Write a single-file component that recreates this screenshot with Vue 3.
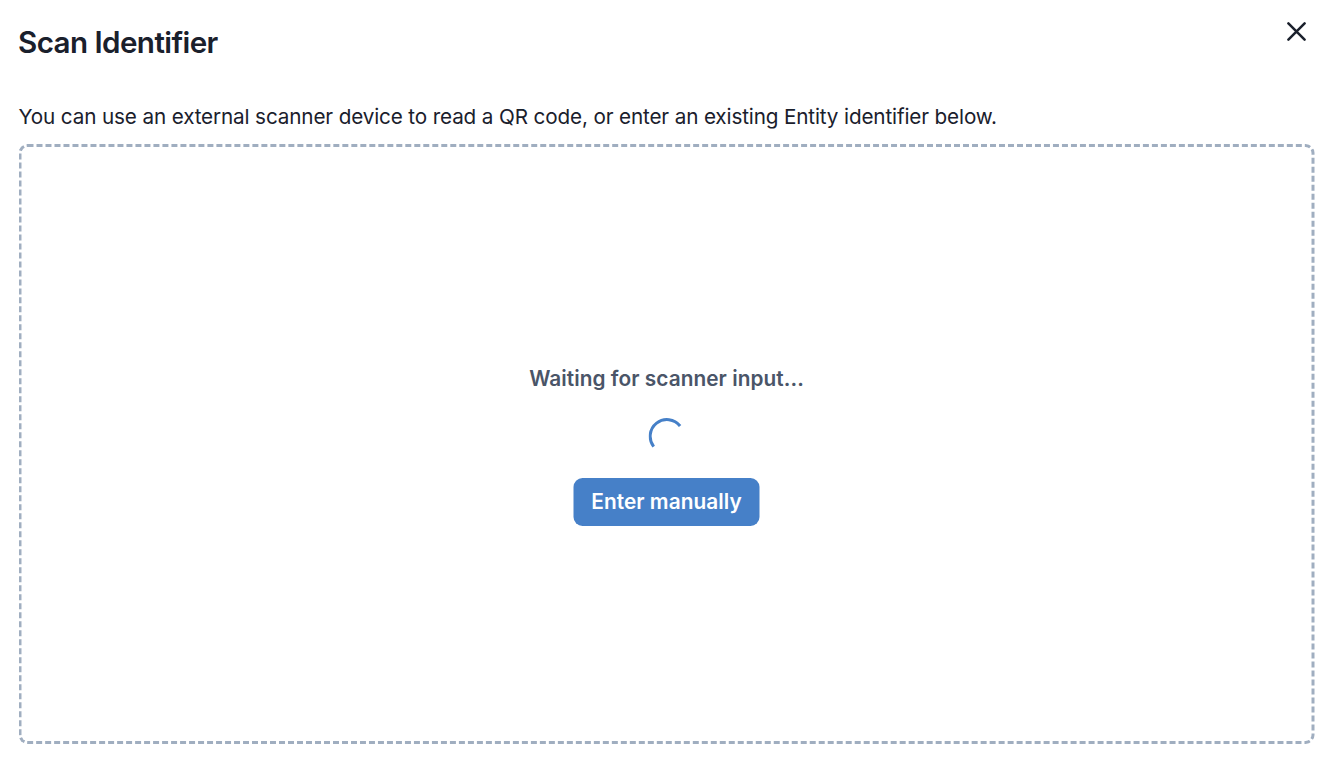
<script setup>
</script>

<template>
  <main class="dialog">
    <header class="header">
      <h1>Scan Identifier</h1>
      <button class="close" aria-label="Close">
        <svg width="20" height="20" viewBox="0 0 20 20"><path d="M1.4 1.4 17.6 17.6M17.6 1.4 1.4 17.6" fill="none" stroke="#1a202c" stroke-width="2.5" stroke-linecap="round" /></svg>
      </button>
    </header>
    <p class="intro">You can use an external scanner device to read a QR code, or enter an existing Entity identifier below.</p>
    <section class="scanner">
      <p class="status">Waiting for scanner input...</p>
      <svg class="spinner" width="36" height="36" viewBox="0 0 36 36"><path d="M5.2 29.6A16.6 16.6 0 0 1 31.6 9" fill="none" stroke="#4680c8" stroke-width="3" /></svg>
      <button class="manual">Enter manually</button>
    </section>
  </main>
</template>

<style>
body { background: #fff; }
</style>
<style scoped>
.dialog { box-sizing: border-box; height: 762px; padding: 18px 19px; display: flex; flex-direction: column; font-family: Inter, sans-serif; color: #1a202c; }
.header { height: 48px; display: flex; justify-content: space-between; align-items: flex-start; }
h1 { margin: 0 0 0 -1px; font-size: 29.6px; line-height: 49px; font-weight: 600; letter-spacing: -0.58px; }
.close { border: 0; padding: 0; margin: 4px 8px 0 0; background: none; height: 20px; }
.close svg { display: block; }
p { margin: 0; }
.intro { margin: 34px 0 0 -0.5px; height: 44px; font-size: 20.7px; line-height: 34px; letter-spacing: -0.14px; white-space: nowrap; }
.scanner { box-sizing: border-box; height: 600px; border: 3px dashed #a0aec0; border-radius: 9px; display: flex; flex-direction: column; align-items: center; padding-top: 215px; transform: translateX(-0.5px); }
.status { font-size: 20.8px; line-height: 34px; font-weight: 600; letter-spacing: 0.06px; color: #4a5568; }
.spinner { margin-top: 21px; }
.manual { margin-top: 25px; width: 186px; height: 48px; padding: 0; border: 0; border-radius: 9px; background: #4680c8; color: #fff; font: 600 20.8px/48px Inter, sans-serif; letter-spacing: 0.06px; white-space: nowrap; }
</style>
